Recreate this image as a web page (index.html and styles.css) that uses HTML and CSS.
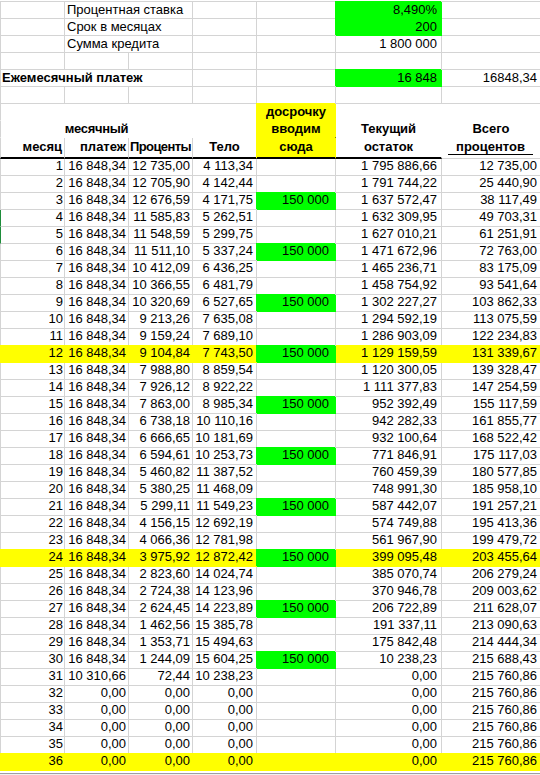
FILE: index.html
```html
<!DOCTYPE html>
<html lang="ru">
<head>
<meta charset="utf-8">
<title>Кредит</title>
<link rel="stylesheet" href="styles.css">
</head>
<body>
<div class="sheet">
  <!-- row 1 -->
  <div class="c a"></div>
  <div class="c s2 l">Процентная ставка</div>
  <div class="c"></div>
  <div class="c"></div>
  <div class="c r pf g">8,490%</div>
  <div class="c"></div>
  <!-- row 2 -->
  <div class="c a"></div>
  <div class="c s2 l">Срок в месяцах</div>
  <div class="c"></div>
  <div class="c"></div>
  <div class="c r pf g">200</div>
  <div class="c"></div>
  <!-- row 3 -->
  <div class="c a"></div>
  <div class="c s2 l">Сумма кредита</div>
  <div class="c"></div>
  <div class="c"></div>
  <div class="c r pf">1 800 000</div>
  <div class="c"></div>
  <!-- row 4 -->
  <div class="c a"></div><div class="c"></div><div class="c"></div><div class="c"></div><div class="c"></div><div class="c"></div><div class="c"></div>
  <!-- row 5 -->
  <div class="c a s3 l1 b">Ежемесячный платеж</div>
  <div class="c"></div>
  <div class="c"></div>
  <div class="c r pf g">16 848</div>
  <div class="c r pg">16848,34</div>
  <!-- row 6 -->
  <div class="c a"></div><div class="c"></div><div class="c"></div><div class="c"></div><div class="c"></div><div class="c"></div><div class="c"></div>
  <!-- row 7 -->
  <div class="c a h"></div>
  <div class="c h"></div>
  <div class="c h"></div>
  <div class="c h"></div>
  <div class="c yh b ctr">досрочку</div>
  <div class="c h"></div>
  <div class="c h"></div>
  <!-- row 8 -->
  <div class="c a h"></div>
  <div class="c h b fc tight">месячный</div>
  <div class="c h"></div>
  <div class="c h"></div>
  <div class="c yh b ctr ul">вводим</div>
  <div class="c h b ctr">Текущий</div>
  <div class="c h b ctr">Всего</div>
  <!-- row 9 -->
  <div class="c a h9 b r">месяц</div>
  <div class="c h9 b r">платеж</div>
  <div class="c h9 b fc tighter">Проценты</div>
  <div class="c h9 hn b ctr">Тело</div>
  <div class="c yh h9 b ctr">сюда</div>
  <div class="c h9 hn b ctr">остаток</div>
  <div class="c hg b"><span class="uline">процентов</span></div>

  <div class="dr"><div>1</div><div>16 848,34</div><div>12 735,00</div><div>4 113,34</div><div></div><div>1 795 886,66</div><div>12 735,00</div></div>
  <div class="dr"><div>2</div><div>16 848,34</div><div>12 705,90</div><div>4 142,44</div><div></div><div>1 791 744,22</div><div>25 440,90</div></div>
  <div class="dr"><div>3</div><div>16 848,34</div><div>12 676,59</div><div>4 171,75</div><div class="g">150 000</div><div>1 637 572,47</div><div>38 117,49</div></div>
  <div class="dr"><div class="sel">4</div><div>16 848,34</div><div>11 585,83</div><div>5 262,51</div><div></div><div>1 632 309,95</div><div>49 703,31</div></div>
  <div class="dr"><div class="sel">5</div><div>16 848,34</div><div>11 548,59</div><div>5 299,75</div><div></div><div>1 627 010,21</div><div>61 251,91</div></div>
  <div class="dr"><div>6</div><div>16 848,34</div><div>11 511,10</div><div>5 337,24</div><div class="g">150 000</div><div>1 471 672,96</div><div>72 763,00</div></div>
  <div class="dr"><div>7</div><div>16 848,34</div><div>10 412,09</div><div>6 436,25</div><div></div><div>1 465 236,71</div><div>83 175,09</div></div>
  <div class="dr"><div>8</div><div>16 848,34</div><div>10 366,55</div><div>6 481,79</div><div></div><div>1 458 754,92</div><div>93 541,64</div></div>
  <div class="dr"><div>9</div><div>16 848,34</div><div>10 320,69</div><div>6 527,65</div><div class="g">150 000</div><div>1 302 227,27</div><div>103 862,33</div></div>
  <div class="dr"><div>10</div><div>16 848,34</div><div>9 213,26</div><div>7 635,08</div><div></div><div>1 294 592,19</div><div>113 075,59</div></div>
  <div class="dr"><div>11</div><div>16 848,34</div><div>9 159,24</div><div>7 689,10</div><div></div><div>1 286 903,09</div><div>122 234,83</div></div>
  <div class="dr y"><div>12</div><div>16 848,34</div><div>9 104,84</div><div>7 743,50</div><div class="g">150 000</div><div>1 129 159,59</div><div>131 339,67</div></div>
  <div class="dr"><div>13</div><div>16 848,34</div><div>7 988,80</div><div>8 859,54</div><div></div><div>1 120 300,05</div><div>139 328,47</div></div>
  <div class="dr"><div>14</div><div>16 848,34</div><div>7 926,12</div><div>8 922,22</div><div></div><div>1 111 377,83</div><div>147 254,59</div></div>
  <div class="dr"><div>15</div><div>16 848,34</div><div>7 863,00</div><div>8 985,34</div><div class="g">150 000</div><div>952 392,49</div><div>155 117,59</div></div>
  <div class="dr"><div>16</div><div>16 848,34</div><div>6 738,18</div><div>10 110,16</div><div></div><div>942 282,33</div><div>161 855,77</div></div>
  <div class="dr"><div>17</div><div>16 848,34</div><div>6 666,65</div><div>10 181,69</div><div></div><div>932 100,64</div><div>168 522,42</div></div>
  <div class="dr"><div>18</div><div>16 848,34</div><div>6 594,61</div><div>10 253,73</div><div class="g">150 000</div><div>771 846,91</div><div>175 117,03</div></div>
  <div class="dr"><div>19</div><div>16 848,34</div><div>5 460,82</div><div>11 387,52</div><div></div><div>760 459,39</div><div>180 577,85</div></div>
  <div class="dr"><div>20</div><div>16 848,34</div><div>5 380,25</div><div>11 468,09</div><div></div><div>748 991,30</div><div>185 958,10</div></div>
  <div class="dr"><div>21</div><div>16 848,34</div><div>5 299,11</div><div>11 549,23</div><div class="g">150 000</div><div>587 442,07</div><div>191 257,21</div></div>
  <div class="dr"><div>22</div><div>16 848,34</div><div>4 156,15</div><div>12 692,19</div><div></div><div>574 749,88</div><div>195 413,36</div></div>
  <div class="dr"><div>23</div><div>16 848,34</div><div>4 066,36</div><div>12 781,98</div><div></div><div>561 967,90</div><div>199 479,72</div></div>
  <div class="dr y"><div>24</div><div>16 848,34</div><div>3 975,92</div><div>12 872,42</div><div class="g">150 000</div><div>399 095,48</div><div>203 455,64</div></div>
  <div class="dr"><div>25</div><div>16 848,34</div><div>2 823,60</div><div>14 024,74</div><div></div><div>385 070,74</div><div>206 279,24</div></div>
  <div class="dr"><div>26</div><div>16 848,34</div><div>2 724,38</div><div>14 123,96</div><div></div><div>370 946,78</div><div>209 003,62</div></div>
  <div class="dr"><div>27</div><div>16 848,34</div><div>2 624,45</div><div>14 223,89</div><div class="g">150 000</div><div>206 722,89</div><div>211 628,07</div></div>
  <div class="dr"><div>28</div><div>16 848,34</div><div>1 462,56</div><div>15 385,78</div><div></div><div>191 337,11</div><div>213 090,63</div></div>
  <div class="dr"><div>29</div><div>16 848,34</div><div>1 353,71</div><div>15 494,63</div><div></div><div>175 842,48</div><div>214 444,34</div></div>
  <div class="dr"><div>30</div><div>16 848,34</div><div>1 244,09</div><div>15 604,25</div><div class="g">150 000</div><div>10 238,23</div><div>215 688,43</div></div>
  <div class="dr"><div>31</div><div>10 310,66</div><div>72,44</div><div>10 238,23</div><div></div><div>0,00</div><div>215 760,86</div></div>
  <div class="dr"><div>32</div><div>0,00</div><div>0,00</div><div>0,00</div><div></div><div>0,00</div><div>215 760,86</div></div>
  <div class="dr"><div>33</div><div>0,00</div><div>0,00</div><div>0,00</div><div></div><div>0,00</div><div>215 760,86</div></div>
  <div class="dr"><div>34</div><div>0,00</div><div>0,00</div><div>0,00</div><div></div><div>0,00</div><div>215 760,86</div></div>
  <div class="dr"><div>35</div><div>0,00</div><div>0,00</div><div>0,00</div><div></div><div>0,00</div><div>215 760,86</div></div>
  <div class="dr y"><div>36</div><div>0,00</div><div>0,00</div><div>0,00</div><div></div><div>0,00</div><div>215 760,86</div></div>
</div>
<div class="tabs"></div>
</body>
</html>
```

FILE: styles.css
```css
* { box-sizing: border-box; }
html, body { margin: 0; padding: 0; background: #ffffff; }
body {
  padding-top: 1px;
  width: 540px;
  height: 775px;
  overflow: hidden;
  font-family: "Liberation Sans", Arial, sans-serif;
  font-size: 13px;
  color: #000000;
}

.sheet {
  display: grid;
  grid-template-columns: 65px 64px 64px 64px 79px 106px 99px;
  grid-template-rows: repeat(8, 17px) 21px;
  grid-auto-rows: 17px;
  width: 541px;
  border-top: 1px solid #d4d4d4;
}

.c {
  border-right: 1px solid #d4d4d4;
  border-bottom: 1px solid #d4d4d4;
  line-height: 16px;
  white-space: nowrap;
  overflow: hidden;
  padding: 0 2px;
}
.a { border-left: 1px solid #d4d4d4; }
.s2 { grid-column: span 2; }
.s3 { grid-column: span 3; }
.l { padding-left: 2px; }
.l1 { padding-left: 1px; }
.r { text-align: right; }
.ctr { text-align: center; }
.b { font-weight: bold; }
.pf { padding-right: 4px; }
.pg { padding-right: 3px; }

/* text wider than its cell, centred and spilling over both sides */
.fc {
  display: flex;
  justify-content: center;
  align-items: flex-start;
  overflow: visible;
  padding: 0;
}
.tight { letter-spacing: -0.3px; }
.tighter { letter-spacing: -0.6px; }

.g {
  background: #00ff00;
  border-right-color: #00ff00;
  border-bottom-color: #00ff00;
  box-shadow: -1px -1px 0 0 #00ff00;
}

/* header area, white-filled cells (no gridlines) */
.h { border-right-color: #ffffff; border-bottom-color: #ffffff; }
.a.h { border-left-color: #d4d4d4; }
.yh {
  background: #ffff00;
  border-right-color: #ffff00;
  border-bottom-color: #ffff00;
  box-shadow: -1px -1px 0 0 #ffff00;
}
.ul { border-bottom-color: #000000; }
.h9 { border-bottom: 2px solid #000000; line-height: 17px; }
.hn { border-right-color: #ffffff; }
.hg { border-right-color: #ffffff; padding: 0 7px 0 6px; }
.uline {
  display: block;
  height: 17px;
  line-height: 17px;
  text-align: center;
  border-bottom: 1px solid #000000;
}

/* data rows */
.dr { display: contents; }
.dr > div {
  border-right: 1px solid #d4d4d4;
  border-bottom: 1px solid #d4d4d4;
  line-height: 14px;
  white-space: nowrap;
  overflow: hidden;
  text-align: right;
}
.dr > div:nth-child(1) { border-left: 1px solid #d4d4d4; padding-right: 1px; }
.dr > div:nth-child(2) { padding-right: 2px; }
.dr > div:nth-child(3) { padding-right: 2px; }
.dr > div:nth-child(4) { padding-right: 3px; }
.dr > div:nth-child(5) { padding-right: 6px; }
.dr > div:nth-child(6) { padding-right: 4px; }
.dr > div:nth-child(7) { padding-right: 3px; }
.dr > div.sel { border-left-color: #1e8c3a; }

.dr.y > div {
  background: #ffff00;
  border-right-color: #ffff00;
  border-bottom-color: #ffff00;
  box-shadow: 0 -1px 0 0 #ffff00;
}
.dr.y > div:nth-child(1) { border-left-color: #ffff00; }
.dr > div.g,
.dr.y > div.g {
  background: #00ff00;
  border-right-color: #00ff00;
  border-bottom-color: #00ff00;
  box-shadow: -1px -1px 0 0 #00ff00;
}

.tabs {
  margin-top: 2px;
  height: 10px;
  border-top: 1px solid #a0a0a0;
  background: #f0f0f0;
}
```
